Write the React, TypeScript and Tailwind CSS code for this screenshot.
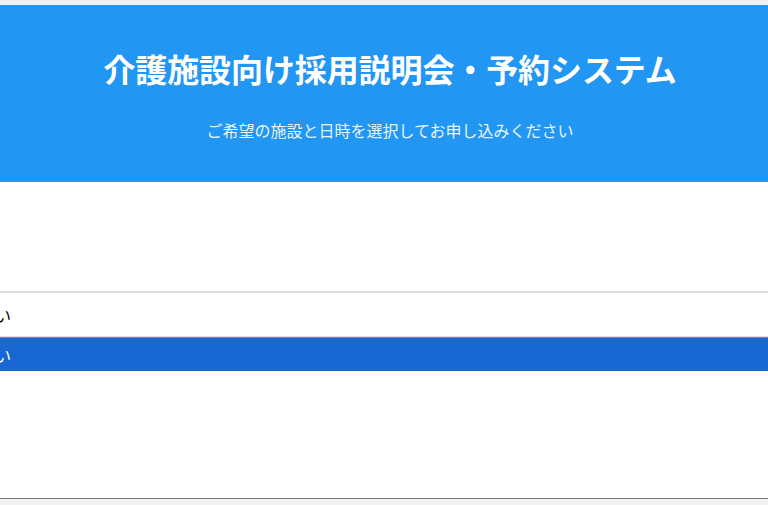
import React from "react";

export default function App() {
  return (
    <div
      className="w-[768px] h-[505px] overflow-hidden bg-[#f2f2f2] pt-[5px]"
      style={{ fontFamily: '"Noto Sans CJK JP", "Noto Sans", sans-serif' }}
    >
      <header className="h-[177px] bg-[#2196f3] flex flex-col items-center text-white pl-[12px]">
        <h1 className="mt-[39px] text-[32px] leading-[48px] font-bold tracking-[-0.1px]">
          介護施設向け採用説明会・予約システム
        </h1>
        <p className="mt-[26px] text-[16px] leading-[24px] opacity-90">
          ご希望の施設と日時を選択してお申し込みください
        </p>
      </header>
      <main className="h-[317px] bg-white border-b border-[#777] flex flex-col">
        <div className="h-[109px]" />
        <div className="h-[2px] bg-[#dddddd]" />
        <div className="h-[43px] flex items-center overflow-hidden text-[16px] text-black">
          <span className="ml-[-5px] whitespace-nowrap">い</span>
        </div>
        <div className="h-px bg-[#dddddd]" />
        <div className="h-px bg-[#888888]" />
        <div className="h-[33px] bg-[#1967d2] flex items-center overflow-hidden text-[16px] text-white">
          <span className="ml-[-5px] whitespace-nowrap">い</span>
        </div>
      </main>
    </div>
  );
}
